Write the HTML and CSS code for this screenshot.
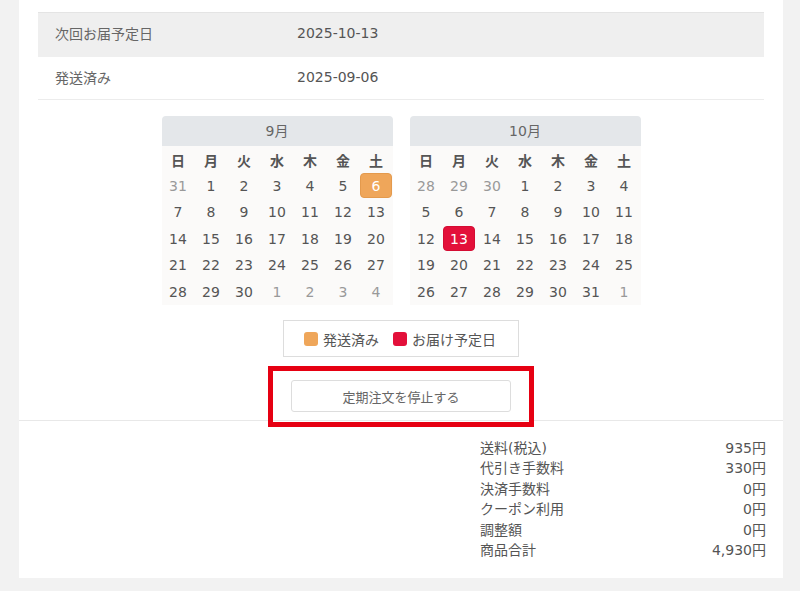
FILE: index.html
```html
<!DOCTYPE html>
<html lang="ja">
<head>
<meta charset="utf-8">
<title>定期注文</title>
<link rel="stylesheet" href="styles.css">
</head>
<body>
<div class="card">
  <div class="top">
    <table class="info">
      <tr class="info-row shaded"><th>次回お届予定日</th><td>2025-10-13</td></tr>
      <tr class="info-row"><th>発送済み</th><td>2025-09-06</td></tr>
    </table>

    <div class="cals">
      <div class="cal">
        <div class="cal-head">9月</div>
        <div class="cal-body">
          <div class="wd">日</div><div class="wd">月</div><div class="wd">火</div><div class="wd">水</div><div class="wd">木</div><div class="wd">金</div><div class="wd">土</div>
          <div class="d out">31</div><div class="d">1</div><div class="d">2</div><div class="d">3</div><div class="d">4</div><div class="d">5</div><div class="d"><span class="mark shipped">6</span></div>
          <div class="d">7</div><div class="d">8</div><div class="d">9</div><div class="d">10</div><div class="d">11</div><div class="d">12</div><div class="d">13</div>
          <div class="d">14</div><div class="d">15</div><div class="d">16</div><div class="d">17</div><div class="d">18</div><div class="d">19</div><div class="d">20</div>
          <div class="d">21</div><div class="d">22</div><div class="d">23</div><div class="d">24</div><div class="d">25</div><div class="d">26</div><div class="d">27</div>
          <div class="d">28</div><div class="d">29</div><div class="d">30</div><div class="d out">1</div><div class="d out">2</div><div class="d out">3</div><div class="d out">4</div>
        </div>
      </div>
      <div class="cal">
        <div class="cal-head">10月</div>
        <div class="cal-body">
          <div class="wd">日</div><div class="wd">月</div><div class="wd">火</div><div class="wd">水</div><div class="wd">木</div><div class="wd">金</div><div class="wd">土</div>
          <div class="d out">28</div><div class="d out">29</div><div class="d out">30</div><div class="d">1</div><div class="d">2</div><div class="d">3</div><div class="d">4</div>
          <div class="d">5</div><div class="d">6</div><div class="d">7</div><div class="d">8</div><div class="d">9</div><div class="d">10</div><div class="d">11</div>
          <div class="d">12</div><div class="d"><span class="mark delivery">13</span></div><div class="d">14</div><div class="d">15</div><div class="d">16</div><div class="d">17</div><div class="d">18</div>
          <div class="d">19</div><div class="d">20</div><div class="d">21</div><div class="d">22</div><div class="d">23</div><div class="d">24</div><div class="d">25</div>
          <div class="d">26</div><div class="d">27</div><div class="d">28</div><div class="d">29</div><div class="d">30</div><div class="d">31</div><div class="d out">1</div>
        </div>
      </div>
    </div>

    <div class="legend-wrap">
      <div class="legend">
        <span class="sw shipped"></span><span class="lg-text">発送済み</span>
        <span class="sw delivery"></span><span class="lg-text">お届け予定日</span>
      </div>
    </div>

    <div class="stop-wrap">
      <div class="stop">
        <button class="stop-btn" type="button">定期注文を停止する</button>
        <div class="highlight"></div>
      </div>
    </div>
  </div>

  <div class="summary">
    <dl class="sum-list">
      <div class="sum-row"><dt>送料(税込)</dt><dd>935円</dd></div>
      <div class="sum-row"><dt>代引き手数料</dt><dd>330円</dd></div>
      <div class="sum-row"><dt>決済手数料</dt><dd>0円</dd></div>
      <div class="sum-row"><dt>クーポン利用</dt><dd>0円</dd></div>
      <div class="sum-row"><dt>調整額</dt><dd>0円</dd></div>
      <div class="sum-row"><dt>商品合計</dt><dd>4,930円</dd></div>
    </dl>
  </div>
</div>
</body>
</html>
```
FILE: styles.css
```css
* { box-sizing: border-box; }

html, body {
  margin: 0;
  padding: 0;
  background: #f2f2f2;
}

body {
  font-family: "DejaVu Sans", "Noto Sans CJK JP", sans-serif;
  font-size: 14px;
  color: #555;
}

.card {
  background: #fff;
  margin: 0 17px 13px 19px;
  width: 764px;
}

.top {
  padding: 12px 19px 8px;
}

.info {
  width: 100%;
  border-collapse: collapse;
  border-top: 1px solid #e4e4e4;
  border-bottom: 1px solid #ececec;
}

.info-row th,
.info-row td {
  text-align: left;
  font-weight: normal;
  padding: 0 0 1px;
  height: 43px;
  vertical-align: middle;
}

.info-row th {
  width: 259px;
  padding-left: 17px;
  color: #666;
}

.info-row td { color: #555; }

.info-row.shaded { background: #efefef; }
.info-row.shaded th,
.info-row.shaded td { height: 44px; padding-bottom: 3px; }

.cals {
  display: flex;
  justify-content: center;
  gap: 17px;
  margin-top: 16px;
}

.cal { width: 231px; }

.cal-head {
  height: 30px;
  line-height: 30px;
  background: #e4e7ea;
  border-radius: 4px 4px 0 0;
  text-align: center;
  color: #666;
}

.cal-body {
  background: #fbfaf9;
  display: grid;
  grid-template-columns: repeat(7, 1fr);
  grid-auto-rows: 26.5px;
}

.wd, .d {
  display: flex;
  align-items: center;
  justify-content: center;
}

.wd {
  font-weight: bold;
  color: #555;
  padding-top: 1px;
}

.d { color: #555; }
.d.out { color: #999; }

.mark {
  width: 32px;
  height: 25px;
  border-radius: 4px;
  color: #fff;
  display: flex;
  align-items: center;
  justify-content: center;
}

.mark.shipped { background: #efa65a; border: 1px solid #e49a4d; }
.mark.delivery { background: #e3103a; border: 1px solid #d40c33; }

.legend-wrap {
  display: flex;
  justify-content: center;
  margin-top: 15px;
}

.legend {
  display: flex;
  align-items: center;
  height: 37px;
  border: 1px solid #ddd;
  padding: 0 22px 0 20px;
}

.sw {
  width: 14px;
  height: 14px;
  border-radius: 3px;
  margin-right: 5px;
}
.sw.shipped { background: #efa65a; }
.sw.delivery { background: #e3103a; margin-left: 14px; }

.lg-text { color: #555; }

.stop-wrap {
  display: flex;
  justify-content: center;
  margin-top: 23px;
}

.stop {
  position: relative;
}

.stop-btn {
  width: 220px;
  height: 32px;
  background: #fff;
  border: 1px solid #ddd;
  border-radius: 3px;
  font-family: "DejaVu Sans", "Noto Sans CJK JP", sans-serif;
  font-size: 13px;
  color: #666;
  display: block;
  padding: 0;
}

.highlight {
  position: absolute;
  left: -23px;
  right: -23px;
  top: -14px;
  bottom: -15px;
  border: 5px solid #e60012;
  pointer-events: none;
}

.summary {
  border-top: 1px solid #e8e8e8;
  padding: 17px 17px 18px 0;
  display: flex;
  justify-content: flex-end;
}

.sum-list {
  margin: 0;
  width: 286px;
}

.sum-row {
  display: flex;
  justify-content: space-between;
  line-height: 20.4px;
}

.sum-row dt, .sum-row dd {
  margin: 0;
  color: #555;
}
```
